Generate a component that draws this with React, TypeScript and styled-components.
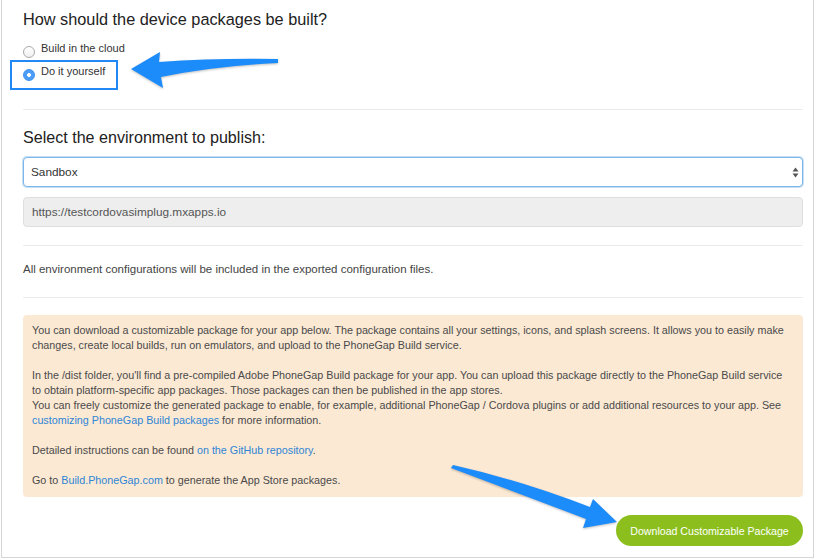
import React from "react";
import styled, { createGlobalStyle } from "styled-components";

const GlobalStyle = createGlobalStyle`
  html, body { margin: 0; padding: 0; background: #fff; }
  body { font-family: "Liberation Sans", Arial, Helvetica, sans-serif; color: #333; }
  * { box-sizing: border-box; }
`;

const Frame = styled.div`
  position: relative;
  width: 813px;
  height: 558px;
  margin-left: 1px;
  border: 1px solid #d6d6d6;
  border-top: none;
  padding: 0 10px 0 21px;
  overflow: hidden;
`;

const Title = styled.h2`
  margin: 0;
  padding-top: 9px;
  font-size: 16.3px;
  line-height: 20px;
  font-weight: normal;
  color: #222;
`;

const RadioList = styled.div`
  display: flex;
  flex-direction: column;
  gap: 7px;
  margin-top: 11px;
`;

const RadioRow = styled.label`
  display: flex;
  align-items: flex-start;
  gap: 6px;
  height: 16px;
  font-size: 11px;
  line-height: 16px;
  color: #333;
`;

const RadioDot = styled.span<{ $checked?: boolean }>`
  flex: none;
  width: 12px;
  height: 12px;
  margin-top: 6px;
  border-radius: 50%;
  border: 1px solid ${(p) => (p.$checked ? "#3a8ff0" : "#a9a9a9")};
  background: ${(p) =>
    p.$checked
      ? "radial-gradient(circle, #fff 0 1.6px, #4b9df5 2.2px)"
      : "linear-gradient(#fff, #f0f0f0)"};
`;

const Rule = styled.hr<{ $top: number }>`
  margin: ${(p) => p.$top}px 0 0;
  border: none;
  border-top: 1px solid #ececec;
  height: 0;
`;

const SubTitle = styled.h3`
  margin: 17px 0 0;
  font-size: 16.1px;
  line-height: 20px;
  font-weight: normal;
  color: #222;
`;

const SelectWrap = styled.div`
  position: relative;
  margin-top: 10px;
`;

const Select = styled.select`
  display: block;
  width: 100%;
  height: 30px;
  padding: 0 24px 0 7px;
  appearance: none;
  -webkit-appearance: none;
  border: 1px solid #7db7ea;
  border-radius: 4px;
  box-shadow: 0 0 0 1px rgba(125, 183, 234, 0.45);
  background: #fff;
  font-family: "Liberation Sans", Arial, sans-serif;
  font-size: 11.8px;
  color: #333;
  outline: none;
`;

const SelectArrows = styled.svg`
  position: absolute;
  right: 4px;
  top: 10px;
  pointer-events: none;
`;

const ReadOnlyField = styled.div`
  margin-top: 10px;
  height: 30px;
  display: flex;
  align-items: center;
  padding: 0 8px;
  background: #eeeeee;
  border: 1px solid #dedede;
  border-radius: 4px;
  font-size: 11.8px;
  color: #555;
`;

const Note = styled.p`
  margin: 15px 0 0;
  font-size: 11.5px;
  line-height: 16px;
  color: #444;
`;

const InfoBox = styled.div`
  margin-top: 17px;
  padding: 8px 9px 9px;
  background: #fbe9d4;
  border-radius: 4px;
  font-size: 10.75px;
  line-height: 15px;
  color: #4a4a4a;
  white-space: nowrap;
`;

const InfoPara = styled.p`
  margin: 0 0 15px;
  &:last-child { margin-bottom: 0; }
`;

const Link = styled.a`
  color: #2f86d4;
  text-decoration: none;
`;

const Actions = styled.div`
  display: flex;
  justify-content: flex-end;
  margin-top: 18px;
`;

const DownloadButton = styled.button`
  width: 187px;
  height: 31px;
  padding: 0;
  border: none;
  border-radius: 16px;
  background: #8cbf1e;
  color: #fff;
  font-family: "Liberation Sans", Arial, sans-serif;
  font-size: 10.6px;
  cursor: pointer;
`;

const Highlight = styled.div`
  position: absolute;
  left: 8px;
  top: 60px;
  width: 108px;
  height: 30px;
  border: 2px solid #2189f5;
  pointer-events: none;
`;

const Annotations = styled.svg`
  position: absolute;
  left: -2px;
  top: 0;
  pointer-events: none;
  filter: drop-shadow(0 1px 1px rgba(0, 0, 0, 0.25));
`;

export default function App() {
  return (
    <>
      <GlobalStyle />
      <Frame>
        <Title>How should the device packages be built?</Title>
        <RadioList>
          <RadioRow>
            <RadioDot />
            Build in the cloud
          </RadioRow>
          <RadioRow>
            <RadioDot $checked />
            Do it yourself
          </RadioRow>
        </RadioList>
        <Rule $top={30} />
        <SubTitle>Select the environment to publish:</SubTitle>
        <SelectWrap>
          <Select defaultValue="sandbox">
            <option value="sandbox">Sandbox</option>
          </Select>
          <SelectArrows width="7" height="11" viewBox="0 0 7 11">
            <path d="M3.5 0.5 L6.5 4.5 H0.5 Z" fill="#555" />
            <path d="M3.5 10.5 L6.5 6.5 H0.5 Z" fill="#555" />
          </SelectArrows>
        </SelectWrap>
        <ReadOnlyField>https://testcordovasimplug.mxapps.io</ReadOnlyField>
        <Rule $top={18} />
        <Note>All environment configurations will be included in the exported configuration files.</Note>
        <Rule $top={20} />
        <InfoBox>
          <InfoPara>
            You can download a customizable package for your app below. The package contains all your settings, icons, and splash screens. It allows you to easily make
            <br />
            changes, create local builds, run on emulators, and upload to the PhoneGap Build service.
          </InfoPara>
          <InfoPara>
            In the /dist folder, you'll find a pre-compiled Adobe PhoneGap Build package for your app. You can upload this package directly to the PhoneGap Build service
            <br />
            to obtain platform-specific app packages. Those packages can then be published in the app stores.
            <br />
            You can freely customize the generated package to enable, for example, additional PhoneGap / Cordova plugins or add additional resources to your app. See
            <br />
            <Link href="#">customizing PhoneGap Build packages</Link> for more information.
          </InfoPara>
          <InfoPara>
            Detailed instructions can be found <Link href="#">on the GitHub repository</Link>.
          </InfoPara>
          <InfoPara>
            Go to <Link href="#">Build.PhoneGap.com</Link> to generate the App Store packages.
          </InfoPara>
        </InfoBox>
        <Actions>
          <DownloadButton>Download Customizable Package</DownloadButton>
        </Actions>
        <Highlight />
        <Annotations width="814" height="559" viewBox="0 0 814 559">
          <path
            d="M131 69 L160 52 L159 62 Q215 58 278 59 L278 63 Q215 66 161 77 L163 88 Z"
            fill="#1d8cfb"
          />
          <path
            d="M617 522 L593 499 L590 507 Q520 480 453 465 L451 468 Q515 492 586 519 L583 528 Z"
            fill="#1d8cfb"
          />
        </Annotations>
      </Frame>
    </>
  );
}
